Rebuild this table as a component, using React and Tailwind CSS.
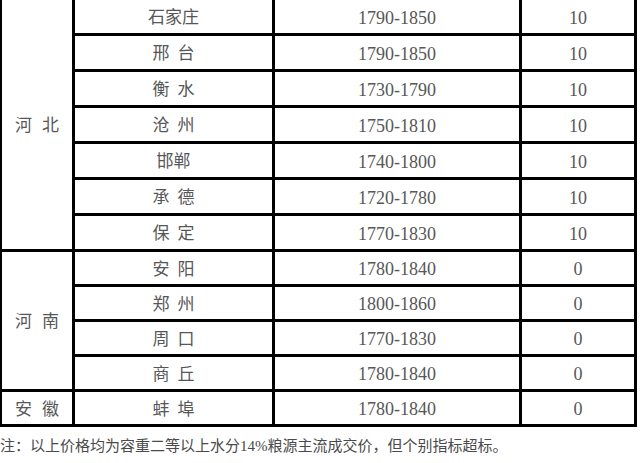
const groups = [
  {
    province: "河 北",
    span: "row-span-7",
    rows: [
      ["石家庄", "1790-1850", "10"],
      ["邢 台", "1790-1850", "10"],
      ["衡 水", "1730-1790", "10"],
      ["沧 州", "1750-1810", "10"],
      ["邯郸", "1740-1800", "10"],
      ["承 德", "1720-1780", "10"],
      ["保 定", "1770-1830", "10"],
    ],
  },
  {
    province: "河 南",
    span: "row-span-4",
    rows: [
      ["安 阳", "1780-1840", "0"],
      ["郑 州", "1800-1860", "0"],
      ["周 口", "1770-1830", "0"],
      ["商 丘", "1780-1840", "0"],
    ],
  },
  {
    province: "安 徽",
    span: "row-span-1",
    rows: [["蚌 埠", "1780-1840", "0"]],
  },
];

const cell =
  "flex items-center justify-center border-black border-r-[3px] border-b-[3px] pt-[3px]";

export default function App() {
  let idx = 0;
  return (
    <div
      className="w-[640px] h-[463px] bg-white overflow-hidden text-[#575757]"
      style={{ fontFamily: '"Liberation Serif", "Noto Sans CJK SC", serif' }}>
      <div className="grid w-[637px] grid-cols-[75px_200px_247px_115px] grid-rows-[repeat(7,36px)_repeat(5,35px)]">
        {groups.map((g, gi) => {
          const last = gi === groups.length - 1;
          return [
            <div
              key={"p" + gi}
              className={`${g.span} ${cell} border-l-2 text-[17px] [word-spacing:6px] ${
                last ? "border-b-2" : ""
              }`}>
              {g.province}
            </div>,
            ...g.rows.flatMap((r, ri) => {
              idx++;
              const bottom = last && ri === g.rows.length - 1 ? "border-b-2" : "";
              return [
                <div key={"a" + idx} className={`${cell} ${bottom} text-[17px] [word-spacing:4px]`}>
                  {r[0]}
                </div>,
                <div key={"b" + idx} className={`${cell} ${bottom} text-[18px]`}>
                  {r[1]}
                </div>,
                <div key={"c" + idx} className={`${cell} ${bottom} border-r-2 text-[18px]`}>
                  {r[2]}
                </div>,
              ];
            }),
          ];
        })}
      </div>
      <p className="mt-[9px] text-[15px] leading-[20px] whitespace-nowrap text-[#4a4a4a]">
        注：以上价格均为容重二等以上水分14%粮源主流成交价，但个别指标超标。
      </p>
    </div>
  );
}
